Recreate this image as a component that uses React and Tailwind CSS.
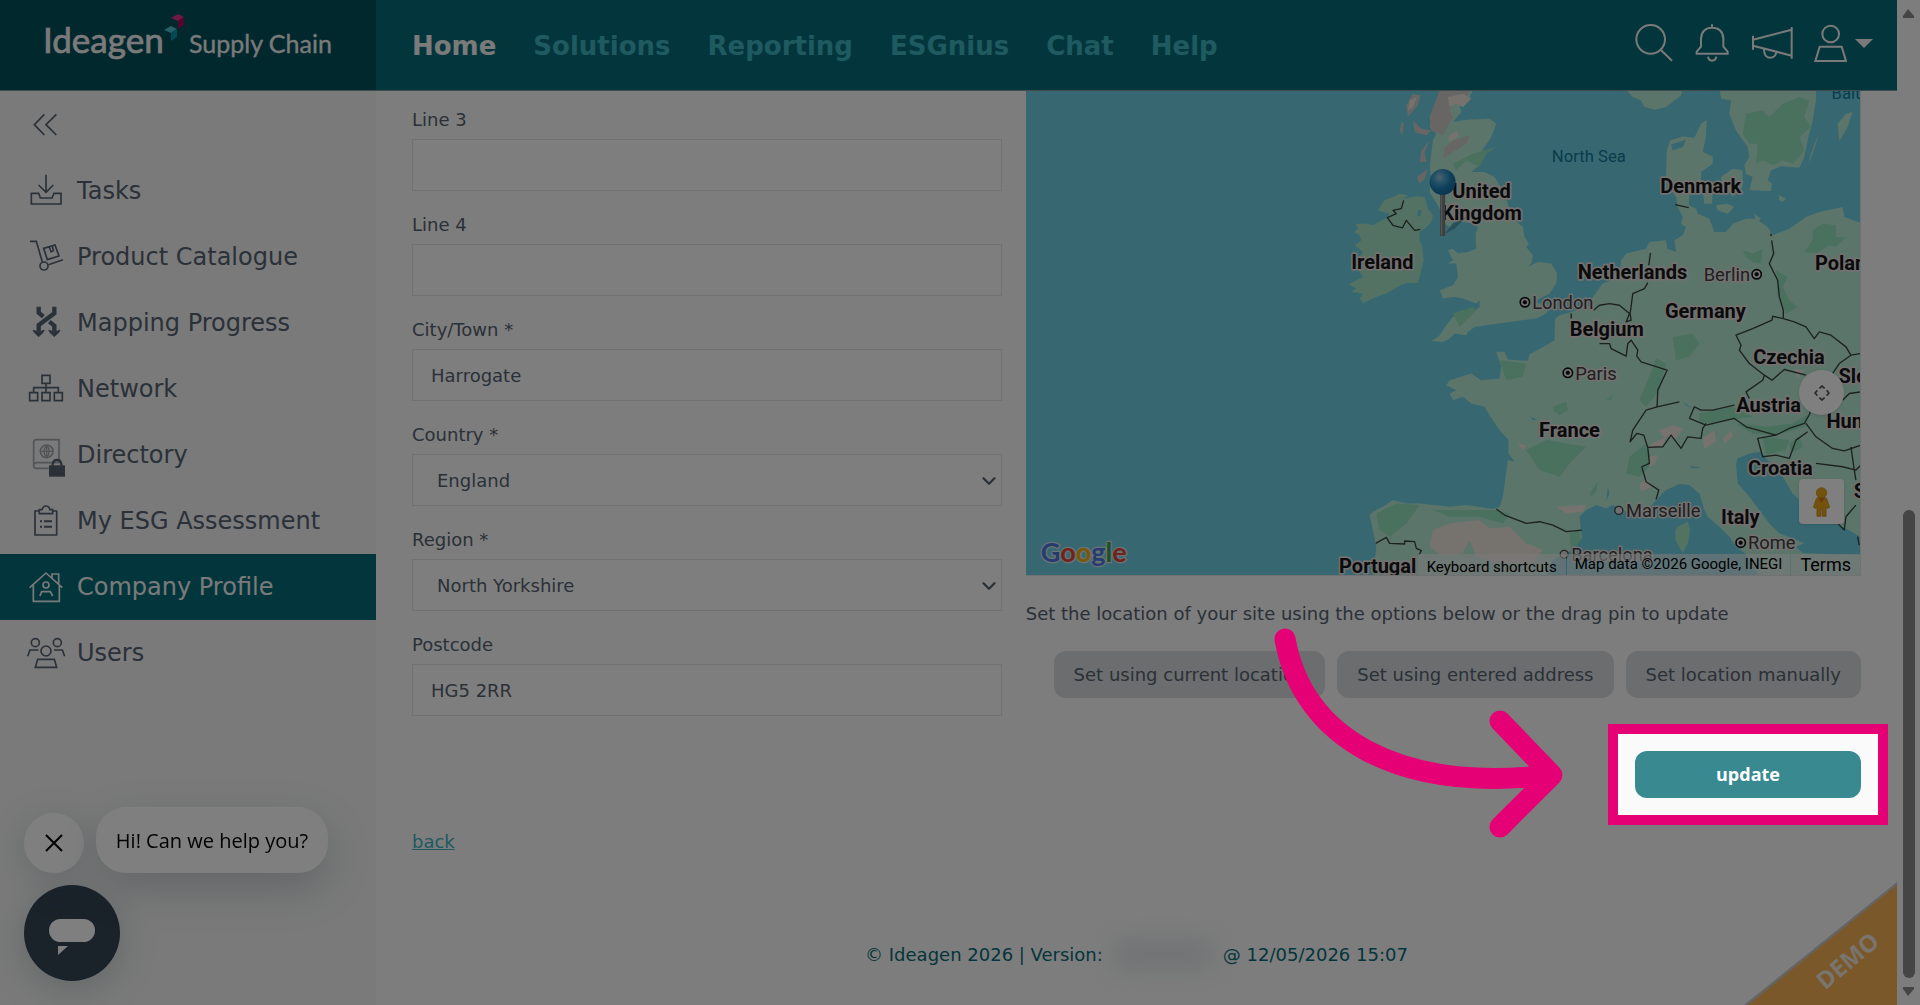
import { useState } from 'react';
import { ChevronDown } from 'lucide-react';
import clsx from 'clsx';

const NAV = ['Home', 'Solutions', 'Reporting', 'ESGnius', 'Chat', 'Help']

const COUNTRIES = ['England', 'Scotland', 'Wales', 'Northern Ireland']
const REGIONS = ['North Yorkshire', 'South Yorkshire', 'West Yorkshire']

const Icon = ({ children }) => (
  <svg viewBox="0 0 108 108" className="w-9 h-9 shrink-0 overflow-visible" fill="none" stroke="currentColor" strokeWidth="5" aria-hidden="true">
    {children}
  </svg>
)

const MENU = [
  {
    label: 'Tasks',
    icon: <Icon><path d="M54 5V58M32 36L54 58L76 36M10 61H32L37 75H72L78 61H99V93H10Z" /></Icon>
  },
  {
    label: 'Product Catalogue',
    icon: (
      <Icon>
        <path d="M6 7H25L43 69M61 77L105 62M47 28L81 18L93 51L58 62ZM64 24L69 38L76 35L73 21" />
        <circle cx="48" cy="81" r="12" />
      </Icon>
    )
  },
  {
    label: 'Mapping Progress',
    icon: (
      <Icon>
        <path strokeWidth="13" d="M32 5V23L46 35M79 5V25L32 60V80M64 50L79 62V80" />
        <path fill="currentColor" strokeWidth="2" d="M15 75L32 81L49 75L46 82L32 95L18 82ZM62 75L79 81L96 75L93 82L79 95L65 82Z" />
      </Icon>
    )
  },
  {
    label: 'Network',
    icon: <Icon><path d="M42 13H66V37H42ZM5 65H29V89H5ZM42 65H66V89H42ZM79 65H103V89H79ZM54 37V65M17 65V50H91V65" /></Icon>
  },
  {
    label: 'Directory',
    icon: (
      <Icon>
        <g opacity="0.5">
          <path d="M93 70V8H25Q17 8 17 16V86Q17 94 25 94H62M93 77H25Q17 77 17 86" />
          <circle cx="56" cy="43" r="19" />
          <path strokeWidth="4" d="M37 43H75M56 24V62M56 24Q40 43 56 62M56 24Q72 43 56 62" />
        </g>
        <path fill="currentColor" stroke="none" d="M63 85H111V119H63Z" />
        <path strokeWidth="7" d="M74 86V82Q76 69 87 69Q98 69 100 82V86" />
      </Icon>
    )
  },
  {
    label: 'My ESG Assessment',
    icon: (
      <Icon>
        <path d="M34 24H21V96H86V24H74M34 32V20H42Q45 9 54 9Q63 9 66 20H74V32Z" />
        <path strokeWidth="6" d="M36 55H42M36 71H42M48 55H72M48 71H72" />
      </Icon>
    )
  },
  {
    label: 'Company Profile',
    active: true,
    icon: (
      <Icon>
        <path d="M5 56L54 12L103 56M16 48V97H94V48M72 26V15H92V44M36 81L41 68H67L74 81" />
        <circle cx="54" cy="48" r="9" />
      </Icon>
    )
  },
  {
    label: 'Users',
    icon: (
      <Icon>
        <circle cx="22" cy="23" r="12" />
        <circle cx="88" cy="23" r="12" />
        <circle cx="54" cy="48" r="15" />
        <path d="M29 73H79L86 97H22ZM-1 64L6 45H31M110 64L103 45H78" />
      </Icon>
    )
  },
]

const Logo = () => (
  <svg viewBox="0 0 300 60" className="w-[300px] h-[60px]" role="img" aria-label="Ideagen Supply Chain">
    <g fill="#f4f4f4" stroke="#f4f4f4" fontFamily="Lato, sans-serif">
      <text x="3" y="42" fontSize="35" strokeWidth="0.7">Ideagen</text>
      <text x="149" y="42" fontSize="25" strokeWidth="0.3">Supply Chain</text>
    </g>
    <path fill="#e0338a" d="M131 7L138 3L144 6L138 10Z" />
    <path fill="#a80d62" d="M138 10L144 6V14L138 18Z" />
    <path fill="#4fc0cc" d="M124 19L131 15L137 18L131 22Z" />
    <path fill="#0b93a8" d="M131 22L137 18V26L131 30Z" />
  </svg>
)

const Header = () => (
  <header className="flex h-[91px] text-[#f4f4f4] bg-[#066c78] border-b border-[#7d9a9e]">
    <div className="w-[376px] shrink-0 pl-10 flex items-start bg-[#02505a] pt-[11px]">
      <Logo />
    </div>
    <nav className="flex-1 flex items-center gap-[37px] pl-9 pt-[2px] text-[26px] font-bold">
      {NAV.map((item, i) => (
        <a key={item} href="#" className={i === 0 ? 'text-[#f4f4f4]' : 'text-[#3cb4c0]'}>{item}</a>
      ))}
    </nav>
    <div className="flex items-center gap-5 pr-6 pb-1">
      <button aria-label="Search">
        <svg viewBox="0 0 120 120" className="w-10 h-10" fill="none" stroke="currentColor" strokeWidth="6">
          <circle cx="50" cy="49" r="43" />
          <path d="M80 80L114 113" />
        </svg>
      </button>
      <button aria-label="Notifications">
        <svg viewBox="0 0 108 120" className="w-9 h-10" fill="none" stroke="currentColor" strokeWidth="6">
          <path d="M54 4V14M8 92H101V86L88 71V46Q86 14 54 14Q24 14 21 46V71L8 86ZM42 101Q44 113 54 113Q65 113 67 101" />
        </svg>
      </button>
      <button aria-label="Announcements">
        <svg viewBox="0 0 132 120" className="w-11 h-10" fill="none" stroke="currentColor" strokeWidth="6">
          <path d="M9 38V80M125 12V107M9 50L125 20M9 68L125 98M42 78Q42 104 60 104Q76 104 79 88" />
        </svg>
      </button>
      <button aria-label="Account" className="flex items-center gap-2">
        <svg viewBox="0 0 99 120" className="w-[33px] h-10" fill="none" stroke="currentColor" strokeWidth="6">
          <circle cx="50" cy="33" r="25" />
          <path d="M17 71H83L96 114H4Z" />
        </svg>
        <svg viewBox="0 0 18 9" className="w-[18px] h-[9px]" fill="currentColor"><path d="M0 0H18L9 9Z" /></svg>
      </button>
    </div>
  </header>
)

const Sidebar = () => (
  <aside className="w-[376px] shrink-0 bg-[#f4f4f4]">
    <button aria-label="Collapse menu" className="h-[67px] pl-[33px] flex items-center">
      <svg viewBox="0 0 72 72" className="w-6 h-6" fill="none" stroke="currentColor" strokeWidth="5">
        <path d="M34 4L4 35L34 66M70 4L39 35L70 66" />
      </svg>
    </button>
    <nav>
      {MENU.map(({ label, icon, active }) => (
        <a
          key={label}
          href="#"
          className={clsx('flex items-center gap-[13px] h-[66px] pl-7 text-2xl', active && 'bg-[#066c78] text-[#f4f4f4]')}
        >
          {icon}
          {label}
        </a>
      ))}
    </nav>
  </aside>
)

const fieldBox = 'w-full h-[52px] border border-[#dee2e6] bg-[#fdfdfd]'

const InputField = ({ id, label, value, onChange }) => (
  <div>
    <label htmlFor={id} className="block mb-[6px]">{label}</label>
    <input id={id} value={value} onChange={(e) => onChange(id, e.target.value)} className={`${fieldBox} px-[18px]`} />
  </div>
)

const SelectField = ({ id, label, value, options, onChange }) => (
  <div>
    <label htmlFor={id} className="block mb-[6px]">{label}</label>
    <div className="relative">
      <select id={id} value={value} onChange={(e) => onChange(id, e.target.value)} className={`${fieldBox} appearance-none px-6`}>
        {options.map((o) => <option key={o}>{o}</option>)}
      </select>
      <ChevronDown size={22} strokeWidth={2.5} className="absolute right-[2px] top-4 pointer-events-none" />
    </div>
  </div>
)

// map units are a third of a pixel
const COUNTRY_LABELS = [
  ['United', 246, 354], ['Kingdom', 246, 418], ['Ireland', -52, 566], ['Denmark', 904, 338],
  ['Netherlands', 699, 597], ['Germany', 918, 712], ['Belgium', 622, 768], ['Poland', 1341, 570],
  ['Czechia', 1169, 850], ['France', 510, 1071], ['Austria', 1108, 997], ['Croatia', 1143, 1184],
  ['Slovakia', 1432, 910], ['Hungary', 1396, 1043], ['Italy', 1023, 1331], ['Portugal', -66, 1480], ['Serbia', 1450, 1255],
]

const CITY_LABELS = [
  ['London', 398, 685, 376, 666], ['Paris', 527, 898, 505, 878], ['Rome', 1046, 1407, 1024, 1388],
  ['Marseille', 680, 1311, 658, 1291], ['Barcelona', 515, 1443, 494, 1423],
]

const FORESTS = [
  'M1040 100L1090 90L1110 110L1150 70L1200 50L1230 60L1215 110L1235 140L1200 170L1215 210L1180 250L1150 240L1120 255L1090 240L1070 250L1075 190L1050 190L1030 160Z',
  'M1030 510L1060 520L1090 505L1085 550L1060 545L1040 530Z',
  'M1240 450L1270 430L1310 435L1310 470L1340 470L1310 500L1290 495L1250 520L1215 515L1240 480Z',
  'M1130 570L1165 590L1150 620L1170 660L1195 680L1160 700L1135 640Z',
  'M820 770L880 760L900 790L870 830L830 840Z',
  'M770 835L800 850L780 930L740 980L720 960L745 900Z',
  'M460 980L500 965L505 990L480 1005L465 995Z',
  'M440 1080L560 1100L510 1150L480 1190L420 1170L380 1110Z',
  'M570 1240L595 1205L590 1235L575 1250Z',
  'M620 960L640 940L635 960Z',
  'M690 1130L740 1090L760 1150L720 1190L680 1180Z',
  'M1010 1030L1100 1040L1180 1030L1230 1000L1220 1040L1130 1065L1060 1060Z',
  'M1090 1070L1170 1080L1160 1110L1100 1125Z',
  'M900 1000L1000 980L1060 1010L990 1020L900 1030Z',
  'M300 840L380 850L370 890L320 900Z',
  'M-70 1300L-10 1270L60 1275L20 1330L-30 1370L-60 1350Z',
  'M100 1290L280 1290L330 1300L310 1330L240 1310L150 1310Z',
  'M510 1360L540 1350L545 1390L515 1410Z',
  'M900 1010L960 1020L940 1035Z',
  'M290 200L260 220L240 260L200 240L170 270L160 250L220 220Z',
  'M160 700L220 680L230 690L180 740Z',
  'M1170 1090L1200 1070L1210 1100L1175 1120Z',
]

const ROCKS = [
  'M120 30H215L190 60L165 65L150 90L160 110L130 165L95 150L90 110Z',
  'M40 40L62 45L55 75L25 108L20 75Z',
  'M40 120L65 145L95 150L80 165L45 155Z', 'M5 125L12 130L8 162L0 150Z',
  'M90 180L75 215L80 245L60 245L65 210Z', 'M60 310L52 290L85 265L75 295Z',
  'M160 180L210 165L200 190L160 215L130 235L135 200Z',
]

const SNOW = [
  'M145 50L190 40L215 55L190 80L170 70L150 80Z', 'M30 60L52 50L40 80L25 90Z', 'M145 170L170 150L178 165L150 185Z',
  'M780 1050L820 1035L850 1045L830 1075L790 1070Z', 'M910 1075L945 1050L950 1085L915 1105Z',
  'M970 1075L995 1050L1000 1070L975 1090Z', 'M720 1210L745 1195L755 1220L725 1235Z',
  'M355 1090L380 1095L370 1110Z', 'M470 1280L560 1275L550 1295L500 1300Z', 'M750 1095L800 1070L790 1100L755 1105Z',
  'M1185 865L1215 870L1195 895Z', 'M750 1130L775 1125L765 1155L750 1160Z',
  'M100 1350L150 1330L240 1320L270 1345L330 1340L380 1390L430 1410L400 1450L300 1450L230 1430L210 1380L190 1420L130 1430L90 1400Z',
]

const BORDERS = [
  'M12 360L5 385L-20 390L-10 400L-37 412L-20 435L8 443L20 420L45 450L62 447',
  'M827 373L868 382', 'M753 518L748 555',
  'M582 690L600 675L630 670L660 675L690 700L680 725L695 720L692 700L700 640L735 625L745 607',
  'M515 700V715M600 790H630L635 805L680 828L685 790L695 780L715 810L712 828L725 845L803 870L775 930L773 980L840 965',
  'M773 980L740 990L700 1050L692 1085L712 1060L733 1065L745 1102L790 1100L815 1065L845 1105L865 1070L905 1075L910 1045L920 1030',
  'M870 1015L885 980L905 990L940 990L1005 975M870 1015L920 1035L1005 1015L1040 1040L1130 1065L1170 1045L1215 1030L1232 1000V970',
  'M745 1102L750 1150L727 1160L740 1205L778 1230L770 1258',
  'M1115 460V468M1117 480L1123 520L1110 550L1135 600L1140 650L1152 690V715',
  'M1152 715L1120 708L1118 720L1060 745L1010 765L1025 795L1020 810L1050 850L1095 885L1090 900L1040 935L1050 955M1095 885L1118 900L1155 868L1220 885',
  'M1152 715L1185 725L1220 740L1245 775L1260 755L1295 765L1340 800L1355 825L1385 820M1355 825L1320 850L1300 880',
  'M1220 1030L1250 1070L1300 1105L1335 1112L1385 1095M1225 1055L1190 1080L1170 1135L1130 1125L1090 1130L1075 1075L1130 1065',
  'M1250 1150L1330 1160L1370 1170L1385 1155M1355 1100L1365 1170L1370 1200M1330 960L1350 940L1385 935',
  'M1315 1330L1335 1350L1340 1310L1370 1275M1375 1370L1380 1395',
  'M290 1287L315 1305L380 1330L420 1325L460 1335L500 1355L547 1350',
  'M-72 1390L-40 1372L-30 1390L15 1392V1383L45 1385L50 1405L65 1412L58 1425',
]

const EuropeMap = () => (
  <svg viewBox="-1122 30 2505 1455" preserveAspectRatio="xMaxYMax slice" className="w-full h-full" role="img" aria-label="Map">
    <defs>
      <radialGradient id="pinBall" cx="0.38" cy="0.32" r="0.7">
        <stop offset="0" stopColor="#9cc8e0" />
        <stop offset="0.3" stopColor="#4fa4d0" />
        <stop offset="0.65" stopColor="#1c80b4" />
        <stop offset="1" stopColor="#136a9c" />
      </radialGradient>
    </defs>
    <rect x="-1122" y="20" width="2515" height="1475" fill="#6ed0e2" />
    <g fill="#a6e4c6">
      <path d="M0 340L25 345L10 355L50 348L75 350L85 385L100 405L95 425L75 445L60 455V480L68 500L72 540L65 570L55 608H20L-10 622L-40 640L-70 650L-110 668L-120 655L-110 640L-145 635L-130 625L-152 612L-130 600L-110 590L-120 575L-135 560L-120 530L-110 515L-135 495L-115 480L-120 465L-137 455L-125 445L-132 430H-95L-80 435L-40 412L-30 400L-50 395L-65 390L-45 360L-20 350Z" />
    </g>
    <g fill="#b7ead5">
      <path d="M120 20H225L205 60L180 80L185 95L160 125L200 118L270 115L290 130L275 170L245 215L205 240L245 240L240 255L215 275H255L285 290L310 330L325 370L345 420L370 440L375 470L388 490L380 500L400 525L395 550L385 560L415 545L455 550L473 580L470 610L450 640L420 655L400 668L440 670L450 680L440 700L410 715L330 725L260 735L225 740L205 755L200 765L165 760L150 775L130 785L97 782L120 765L140 735L160 710L190 690L225 692L240 680V660L230 670L190 655L165 650L130 655L120 630L160 615L175 590L170 550L145 550L160 540L145 510L160 505L175 520L205 515L230 505L228 460L235 440L220 430L165 420L150 440L135 430L130 400L90 335L95 300L90 260L100 180L110 160L90 140L100 110L120 60Z" />
      <path d="M675 20L700 50L725 60L735 80L765 88L800 80L845 45L850 20Z" />
      <path d="M960 20L965 55L995 60L990 100L1010 150L1045 200L1050 230L1035 255L1040 280L1060 290L1050 330L1115 332L1118 310L1105 300L1115 270L1145 258L1200 262L1215 230L1225 180L1240 120L1250 60V20Z" />
      <path d="M1258 160L1235 220L1228 252L1250 190ZM1340 100L1360 95L1345 140L1320 182L1315 130ZM965 290L1000 265L1030 270V320L1000 350L990 335L970 325ZM950 375L985 370L1005 380L985 400L955 390ZM910 335L940 330L938 370L915 370ZM1140 345L1160 355L1150 365L1138 358ZM1065 400L1085 415L1070 430Z" />
      <path d="M922 118L920 165L910 215L940 228V250L905 275V300L895 330L870 345L868 375L890 385L895 400L930 415L945 455L980 455L1000 430L1040 415H1070L1105 440L1120 465L1170 445L1220 410L1260 395L1330 380L1335 410L1390 430V1490H-80L-70 1400L-90 1305L-80 1295L-50 1280L-20 1260L20 1270H60L150 1280L200 1275L280 1287L300 1280L310 1250L325 1140L345 1145L327 1120V1080L300 1050L270 1005L255 980L215 970L190 950L160 960L150 940L170 930L140 915L150 900L215 880L245 900L300 895L305 860L290 815H315L325 838L385 842L390 822L440 795L465 780L467 715L480 705L515 695L570 675L580 650L610 610L660 590L665 540L680 520L740 505L750 485L780 482L800 480L803 505L830 515L825 480L850 465L860 440L845 430L850 410L835 380L830 350L808 320L800 280L802 210L812 180L850 168L885 172L905 130Z" />
    </g>
    <g fill="#94e0bc">{FORESTS.map((d) => <path key={d} d={d} />)}</g>
    <g fill="#d0cdc8">{ROCKS.map((d) => <path key={d} d={d} />)}</g>
    <g fill="#ece6dd">{SNOW.map((d) => <path key={d} d={d} />)}</g>
    <g fill="#6ed0e2">
      <path d="M545 1353L540 1310L560 1290L590 1275L620 1285L640 1275L680 1295H740L770 1260L800 1230L840 1212L870 1215L900 1240L915 1290L925 1310L960 1340L990 1370L1010 1400L1040 1422L1060 1450L1080 1490H440L460 1440L520 1410L548 1375Z" />
      <path d="M1010 1150L1015 1135L1050 1120L1085 1115L1100 1135L1110 1145L1150 1190L1180 1240L1240 1295L1330 1340L1390 1375V1425L1210 1420L1190 1400L1215 1390L1140 1360L1110 1330L1080 1290L1050 1250L1015 1210Z" />
      <path d="M55 390L65 388L63 408L52 408ZM815 192L860 178L850 200L820 210ZM850 965L880 985L860 975ZM870 1158L905 1162L880 1165ZM625 1220L630 1240L620 1265ZM393 1010L412 1018L400 1020Z" />
    </g>
    <path fill="#a4e6c5" d="M835 1340L865 1325L872 1350L865 1390L850 1420L828 1380V1350Z" />
    <g fill="none" stroke="#39423f" strokeWidth="4" strokeLinejoin="round">{BORDERS.map((d) => <path key={d} d={d} />)}</g>

    <g fontFamily="Roboto, sans-serif" strokeLinejoin="round" style={{ paintOrder: 'stroke' }}>
      <g fill="#12799b" fontSize="50">
        <text x="457" y="246">North Sea</text>
        <text x="1297" y="56">Baltic Sea</text>
      </g>
      <g fill="#3c4043" stroke="#e6e0de" strokeWidth="9" fontSize="55">
        {CITY_LABELS.map(([name, x, y]) => <text key={name} x={x} y={y}>{name}</text>)}
        <text x="1052" y="602" textAnchor="end">Berlin</text>
      </g>
      <g fill="#151719" stroke="#e6e0de" strokeWidth="10" fontSize="60" fontWeight="700" textAnchor="middle">
        {COUNTRY_LABELS.map(([name, x, y]) => <text key={name} x={x} y={y}>{name}</text>)}
      </g>
    </g>
    {[...CITY_LABELS.slice(0, 3), ['Berlin', 0, 0, 1072, 582]].map(([name, , , cx, cy]) => (
      <g key={name} stroke="#111">
        <circle cx={cx} cy={cy} r="14" fill="#eee" strokeWidth="5" />
        <circle cx={cx} cy={cy} r="6" fill="#111" />
      </g>
    ))}
    {CITY_LABELS.slice(3).map(([name, , , cx, cy]) => (
      <circle key={name} cx={cx} cy={cy} r="12" fill="#ddd" stroke="#444" strokeWidth="4" />
    ))}

    <path d="M134 462L160 430L200 410L165 445Z" fill="#3c6d70" opacity="0.5" />
    <path d="M129 340V467" stroke="#7d7d7d" strokeWidth="15" />
    <path d="M126 340V465" stroke="#a9a9a9" strokeWidth="4" />
    <circle cx="129" cy="305" r="39" fill="url(#pinBall)" />

    <g fontFamily="Lato, sans-serif" fontSize="81" fontWeight="700" stroke="#d8e4e8" strokeWidth="8" strokeLinejoin="round" style={{ paintOrder: 'stroke' }}>
      <text x="-1078" y="1447">
        <tspan fill="#4878e0">G</tspan>
        <tspan fill="#e04438">o</tspan>
        <tspan fill="#eeb010">o</tspan>
        <tspan fill="#4878e0">g</tspan>
        <tspan fill="#36a350">l</tspan>
        <tspan fill="#e04438">e</tspan>
      </text>
    </g>
  </svg>
)

const SiteMap = () => (
  <div className="relative h-[485px] overflow-hidden border-r border-b border-[#dee2e6] text-black font-['Roboto',sans-serif]">
    <EuropeMap />
    <button aria-label="Map camera controls" className="absolute right-4 bottom-[160px] w-[45px] h-[45px] rounded-full bg-white shadow flex items-center justify-center">
      <svg viewBox="0 0 48 48" className="w-4 h-4" fill="none" stroke="#555" strokeWidth="5">
        <path d="M16 10L24 3L32 10M16 38L24 45L32 38M10 16L3 24L10 32M38 16L45 24L38 32" />
      </svg>
    </button>
    <button aria-label="Street View" className="absolute right-4 bottom-[51px] w-[45px] h-[45px] rounded-sm bg-white shadow flex items-center justify-center">
      <svg viewBox="0 0 52 92" className="w-[17px] h-[30px]" stroke="#c07f10" strokeWidth="2" fill="#e6a418">
        <path d="M10 36Q12 32 18 32H34Q40 32 42 36L51 62L44 66L40 60V90H28V68H24V90H12V60L8 66L1 62Z" />
        <path d="M16 32L26 48L36 32Z" fill="#d86c1c" stroke="none" />
        <circle cx="26" cy="18" r="16" />
      </svg>
    </button>
    <div className="absolute right-0 bottom-0 h-[21px] flex items-center gap-px text-[15px]">
      <button className="h-full px-[9px] bg-[#f5f5f5]/60">Keyboard shortcuts</button>
      <span className="h-full px-2 flex items-center bg-[#f5f5f5]/60">Map data ©2026 Google, INEGI</span>
      <a href="#" className="h-full px-[9px] flex items-center text-lg bg-[#f5f5f5]/60">Terms</a>
    </div>
  </div>
)

// dims everything but the control it surrounds
const Spotlight = ({ children }) => (
  <div className="relative w-[226px]">
    {children}
    <div className="absolute -inset-[27px] z-40 border-[10px] border-[#e50075] shadow-[0_0_0_3000px_rgba(0,0,0,0.5)] pointer-events-none" />
    <svg viewBox="0 0 300 220" className="absolute z-50 right-[291px] -top-[131px] w-[300px] h-[220px] pointer-events-none" fill="none" stroke="#e50075" strokeWidth="21" strokeLinecap="round" strokeLinejoin="round">
      <path d="M15 19C33 118 128 173 280 155M230 101L282 155L230 207" />
    </svg>
  </div>
)

const ChatWidget = () => (
  <div className="fixed left-6 bottom-6 text-black">
    <div className="flex items-end gap-3 mb-3">
      <button aria-label="Close" className="w-[60px] h-[60px] rounded-full bg-white flex items-center justify-center shadow-[0_8px_36px_rgba(60,90,100,0.22)]">
        <svg viewBox="0 0 18 18" className="w-[18px] h-[18px]" stroke="currentColor" strokeWidth="2"><path d="M1 1L17 17M17 1L1 17" /></svg>
      </button>
      <button className="h-[66px] w-[232px] pt-[2px] rounded-[30px] bg-white text-xl whitespace-nowrap font-['Open_Sans',sans-serif] shadow-[0_16px_40px_rgba(60,90,100,0.25)]">
        Hi! Can we help you?
      </button>
    </div>
    <button aria-label="Open chat" className="w-24 h-24 block rounded-full bg-[#344454] shadow-[0_8px_36px_rgba(60,90,100,0.25)]">
      <svg viewBox="0 0 96 96" fill="#fff">
        <rect x="25" y="34" width="46" height="23" rx="11.5" />
        <path d="M34 61H44L34 70Z" />
      </svg>
    </button>
  </div>
)

const DemoRibbon = () => (
  <svg viewBox="0 0 160 128" className="fixed right-[23px] bottom-0 w-[160px] h-[128px]" role="img" aria-label="Demo">
    <path d="M160 5L7 128H160Z" fill="#555" opacity="0.3" />
    <path d="M160 8L11 128H160Z" fill="#f6b052" />
    <text x="111" y="95" transform="rotate(-40 107 86)" textAnchor="middle" fill="#f0e8dc" fontFamily="Open Sans, sans-serif" fontSize="24" fontWeight="700">DEMO</text>
  </svg>
)

const ScrollBar = () => (
  <div className="fixed right-0 inset-y-0 w-[23px] flex flex-col items-center bg-[#fafafa]" aria-hidden="true">
    <svg viewBox="0 0 11 9" className="mt-[9px] w-[11px] h-[9px]" fill="#8a8a8a"><path d="M5 0L11 7V9H0V7Z" /></svg>
    <div className="mt-auto w-3 h-[468px] rounded-full bg-[#8a8a8a]" />
    <svg viewBox="0 0 11 9" className="mt-[9px] mb-[9px] w-[11px] h-[9px]" fill="#8a8a8a"><path d="M5 9L11 2V0H0V2Z" /></svg>
  </div>
)

const siteButton = 'h-[47px] px-5 rounded-xl bg-[#d8dade]'

const CompanyProfile = () => {
  const [values, setValues] = useState({
    line3: '',
    line4: '',
    city: 'Harrogate',
    country: 'England',
    region: 'North Yorkshire',
    postcode: 'HG5 2RR'
  })

  const onChange = (name, value) => setValues({ ...values, [name]: value })

  return (
    <main className="flex-1 px-9 pb-9">
      <form onSubmit={(e) => e.preventDefault()}>
        <div className="grid grid-cols-12 gap-6">
          <div className="col-span-5 flex flex-col gap-5 pt-[15px]">
            <InputField id="line3" label="Line 3" value={values.line3} onChange={onChange} />
            <InputField id="line4" label="Line 4" value={values.line4} onChange={onChange} />
            <InputField id="city" label="City/Town *" value={values.city} onChange={onChange} />
            <SelectField id="country" label="Country *" value={values.country} options={COUNTRIES} onChange={onChange} />
            <SelectField id="region" label="Region *" value={values.region} options={REGIONS} onChange={onChange} />
            <InputField id="postcode" label="Postcode" value={values.postcode} onChange={onChange} />
          </div>
          <div className="col-span-7">
            <SiteMap />
            <p className="mt-6">Set the location of your site using the options below or the drag pin to update</p>
            <div className="mt-6 flex justify-end gap-3 whitespace-nowrap">
              <button type="button" className={siteButton}>Set using current location</button>
              <button type="button" className={siteButton}>Set using entered address</button>
              <button type="button" className={siteButton}>Set location manually</button>
            </div>
          </div>
        </div>
        <div className="mt-[35px] flex justify-end">
          <Spotlight>
            <button type="submit" className="w-full h-[47px] rounded-xl bg-[#388990] text-white font-bold font-['Open_Sans',sans-serif]">update</button>
          </Spotlight>
        </div>
      </form>
      <a href="#" className="inline-block mt-[30px] underline text-[#3cb4c0]">back</a>
      <footer className="mt-[86px] flex justify-center text-[#066c78]">
        <span>© Ideagen 2026 | Version:</span>
        <span className="w-[96px] mx-3 bg-[#dde5e7] blur-md" />
        <span>@ 12/05/2026 15:07</span>
      </footer>
    </main>
  )
}

export default function App() {
  return (
    <div className="min-h-screen pr-[23px] flex flex-col bg-[#fafafa] text-[#566270] text-[18px] leading-[27px] font-['DejaVu_Sans',Verdana,sans-serif]">
      <Header />
      <div className="flex-1 flex">
        <Sidebar />
        <CompanyProfile />
      </div>
      <ChatWidget />
      <DemoRibbon />
      <ScrollBar />
    </div>
  )
}
